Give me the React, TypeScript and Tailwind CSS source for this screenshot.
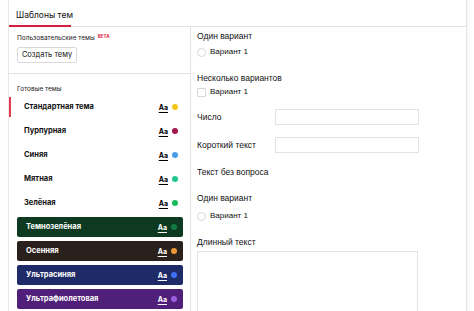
import React from "react";

interface ThemeItem {
  label: string;
  dot: string;
  bg?: string;
  active?: boolean;
}

const themes: ThemeItem[] = [
  { label: "Стандартная тема", dot: "bg-[#f6c619]", active: true },
  { label: "Пурпурная", dot: "bg-[#a3144d]" },
  { label: "Синяя", dot: "bg-[#4c9be8]" },
  { label: "Мятная", dot: "bg-[#20c58f]" },
  { label: "Зелёная", dot: "bg-[#19bc5a]" },
];

const darkThemes: ThemeItem[] = [
  { label: "Темнозелёная", dot: "bg-[#127a42]", bg: "bg-[#0e3a22]" },
  { label: "Осенняя", dot: "bg-[#ec9a3a]", bg: "bg-[#2b211c]" },
  { label: "Ультрасиняя", dot: "bg-[#3f6ff2]", bg: "bg-[#1f2a68]" },
  { label: "Ультрафиолетовая", dot: "bg-[#9d5de0]", bg: "bg-[#4f1f7a]" },
];

const AaMark: React.FC<{ light?: boolean }> = ({ light }) => (
  <span
    className={`text-[7px] font-bold leading-none underline underline-offset-2 ${
      light ? "text-white" : "text-black"
    }`}
  >
    Aa
  </span>
);

const ThemeRow: React.FC<{ item: ThemeItem }> = ({ item }) => (
  <div className="relative flex h-[24px] items-center pl-[15px] pr-[12px]">
    {item.active && (
      <span className="absolute left-0 top-[2px] h-[20px] w-[2px] bg-[#e8384f]" />
    )}
    <span className="flex-1 text-[7.5px] font-bold text-[#111]">{item.label}</span>
    <AaMark />
    <span className={`ml-[4px] h-[6px] w-[6px] rounded-full ${item.dot}`} />
  </div>
);

const DarkRow: React.FC<{ item: ThemeItem }> = ({ item }) => (
  <div
    className={`flex h-[20px] items-center rounded-[2px] pl-[9px] pr-[6px] ${item.bg}`}
  >
    <span className="flex-1 text-[7.5px] font-bold text-white">{item.label}</span>
    <AaMark light />
    <span className={`ml-[4px] h-[6px] w-[6px] rounded-full ${item.dot}`} />
  </div>
);

const Radio = () => (
  <span className="h-[9px] w-[9px] rounded-full border border-[#d6d6d6] bg-white" />
);

const Checkbox = () => (
  <span className="h-[9px] w-[9px] rounded-[1px] border border-[#d6d6d6] bg-white" />
);

export default function App() {
  return (
    <div
      className="h-[311px] w-[474px] overflow-hidden bg-white pl-[8px]"
      style={{ fontFamily: "'Liberation Sans', Arial, sans-serif" }}
    >
      <div className="flex h-full w-[459px] flex-col border-l border-r border-[#e6e6e6] shadow-[1px_0_3px_rgba(0,0,0,0.06)]">
        {/* Tabs */}
        <div className="flex h-[27px] shrink-0 border-b border-[#e3e3e3]">
          <div className="relative flex w-[62px] items-center pl-[7px] pt-[4px]">
            <span
              className="whitespace-nowrap text-[8.5px] leading-none text-[#111]"
              style={{ fontFamily: "Inter, sans-serif" }}
            >
              Шаблоны тем
            </span>
            <span className="absolute bottom-[-1px] left-0 h-[2px] w-[62px] bg-[#d81e43]" />
          </div>
        </div>

        <div className="flex min-h-0 flex-1">
          {/* Sidebar */}
          <aside
            className="w-[182px] shrink-0 border-r border-[#e3e3e3]"
            style={{ fontFamily: "Inter, sans-serif" }}
          >
            <div className="border-b border-[#e3e3e3] px-[8px] pb-[10px] pt-[7px]">
              <div className="flex h-[8px] items-start text-[6.5px] leading-[8px] text-[#222]">
                Пользовательские темы
                <span className="ml-[3px] text-[4.5px] font-bold leading-[6px] text-[#e0223e]">
                  BETA
                </span>
              </div>
              <button className="mt-[5px] block h-[16px] w-[60px] rounded-[2px] border border-[#d9d9d9] text-[7.5px] leading-none text-[#111]">
                Создать тему
              </button>
            </div>

            <div className="pt-[11px]">
              <div className="px-[8px] text-[6.5px] leading-[8px] text-[#222]">
                Готовые темы
              </div>
              <div className="mt-[2px]">
                {themes.map((t) => (
                  <ThemeRow key={t.label} item={t} />
                ))}
              </div>
              <div className="mt-[2px] flex flex-col gap-[4px] pl-[8px] pr-[7px]">
                {darkThemes.map((t) => (
                  <DarkRow key={t.label} item={t} />
                ))}
              </div>
            </div>
          </aside>

          {/* Preview */}
          <main className="flex-1 pl-[6px] text-[8.5px] text-[#111]">
            <div className="pt-[3px] leading-[12px]">Один вариант</div>
            <div className="mt-[4px] flex items-center gap-[4px]">
              <Radio />
              <span className="text-[8px]">Вариант 1</span>
            </div>

            <div className="mt-[14px] leading-[12px]">Несколько вариантов</div>
            <div className="mt-[2px] flex items-center gap-[4px]">
              <Checkbox />
              <span className="text-[8px]">Вариант 1</span>
            </div>

            <div className="mt-[11px] flex h-[16px] items-center">
              <span className="w-[78px]">Число</span>
              <span className="h-[16px] w-[144px] border border-[#e3e3e3]" />
            </div>
            <div className="mt-[12px] flex h-[16px] items-center">
              <span className="w-[78px]">Короткий текст</span>
              <span className="h-[16px] w-[144px] border border-[#e3e3e3]" />
            </div>

            <div className="mt-[13px] leading-[12px]">Текст без вопроса</div>

            <div className="mt-[14px] leading-[12px]">Один вариант</div>
            <div className="mt-[6px] flex items-center gap-[4px]">
              <Radio />
              <span className="text-[8px]">Вариант 1</span>
            </div>

            <div className="mt-[14px] leading-[12px]">Длинный текст</div>
            <div className="mt-[3px] h-[70px] w-[221px] border border-[#e3e3e3]" />
          </main>
        </div>
      </div>
    </div>
  );
}
